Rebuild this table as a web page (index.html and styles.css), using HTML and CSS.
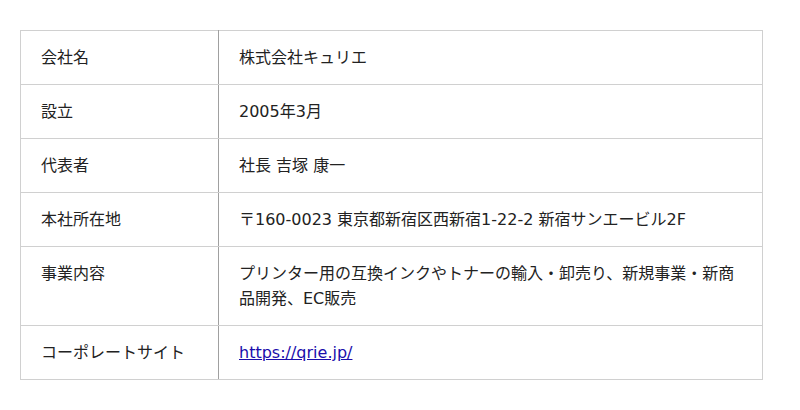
FILE: index.html
```html
<!DOCTYPE html>
<html lang="ja">
<head>
<meta charset="utf-8">
<link rel="stylesheet" href="styles.css">
</head>
<body>
<div class="wrap">
<table class="info">
<tr><th>会社名</th><td>株式会社キュリエ</td></tr>
<tr><th>設立</th><td>2005年3月</td></tr>
<tr><th>代表者</th><td>社長 吉塚 康一</td></tr>
<tr><th>本社所在地</th><td>〒160-0023 東京都新宿区西新宿1-22-2 新宿サンエービル2F</td></tr>
<tr><th>事業内容</th><td>プリンター用の互換インクやトナーの輸入・卸売り、新規事業・新商品開発、EC販売</td></tr>
<tr><th>コーポレートサイト</th><td><a href="https://qrie.jp/">https://qrie.jp/</a></td></tr>
</table>
</div>
</body>
</html>
```
FILE: styles.css
```css
html, body { margin: 0; padding: 0; background: #fff; }
body {
  font-family: "DejaVu Sans", "Noto Sans CJK JP", sans-serif;
  font-size: 16px;
  color: #222;
}
.wrap { padding: 30px 38px 0 20px; }
.info {
  width: 743px;
  border-collapse: collapse;
}
.info th, .info td {
  border: 1px solid #d0d0d0;
  padding: 14px 20px;
  line-height: 25px;
  text-align: left;
  vertical-align: top;
  font-weight: normal;
}
.info th {
  width: 157px;
  border-right-color: #a0a0a0;
}
.info a { color: #1a0dab; }
```
